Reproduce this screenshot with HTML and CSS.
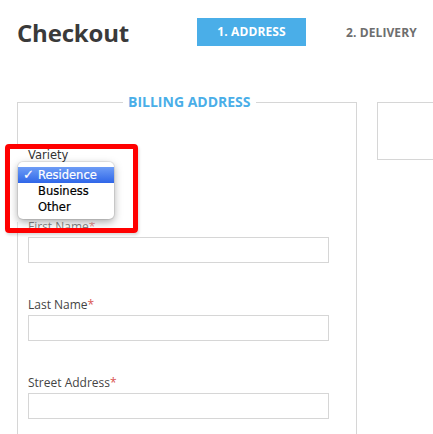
FILE: index.html
```html
<!DOCTYPE html>
<html>
<head>
<meta charset="utf-8">
<link rel="stylesheet" href="styles.css">
</head>
<body>
<div class="page">
  <header class="header">
    <h1 class="title">Checkout</h1>
    <div class="step step-active">1. ADDRESS</div>
    <div class="step">2. DELIVERY</div>
  </header>
  <main class="main">
    <fieldset class="panel billing">
      <legend class="legend">BILLING ADDRESS</legend>
      <div class="field">
        <label class="field-label">First Name<span class="req">*</span></label>
        <div class="input"></div>
      </div>
      <div class="field">
        <label class="field-label">Last Name<span class="req">*</span></label>
        <div class="input"></div>
      </div>
      <div class="field">
        <label class="field-label">Street Address<span class="req">*</span></label>
        <div class="input"></div>
      </div>
    </fieldset>
    <fieldset class="panel side"></fieldset>
  </main>
  <div class="callout">
    <div class="callout-label">Variety</div>
    <div class="menu">
      <div class="menu-item selected"><span class="check">✓</span>Residence</div>
      <div class="menu-item"><span class="check"></span>Business</div>
      <div class="menu-item"><span class="check"></span>Other</div>
    </div>
  </div>
</div>
</body>
</html>
```

FILE: styles.css
```css
html {
  overflow: hidden;
}
body {
  margin: 0;
  background: #fff;
  font-family: "Open Sans", "Liberation Sans", sans-serif;
  color: #444;
}
.page {
  position: relative;
  padding-left: 17px;
}
.header {
  display: flex;
  align-items: center;
  padding-top: 18px;
  height: 28px;
}
.title {
  margin: 2px 0 0 0;
  width: 180px;
  font-size: 24px;
  line-height: 28px;
  font-weight: 700;
  color: #3a3a3a;
  letter-spacing: -0.2px;
}
.step {
  font-size: 12px;
  font-weight: 700;
  color: #6e6e6e;
  letter-spacing: 0.1px;
}
.step-active {
  width: 109px;
  height: 28px;
  line-height: 28px;
  text-align: center;
  background: #4aaee8;
  color: #fff;
  margin-right: 40px;
}
.main {
  display: flex;
  align-items: flex-start;
  gap: 20px;
  margin-top: 48px;
}
.panel {
  margin: 0;
  border: 1px solid #d6d6d6;
  box-sizing: border-box;
}
.billing {
  flex: 0 0 340px;
  width: 340px;
  padding: 109px 26px 40px 10px;
}
.legend {
  margin: 0 auto 0 95px;
  padding: 0 5px;
  font-size: 14px;
  line-height: 16px;
  font-weight: 700;
  color: #4aaee8;
}
.side {
  flex: 0 0 200px;
  height: 58px;
  margin-top: 8px;
  padding: 0;
}
.field {
  margin-bottom: 34px;
}
.field-label {
  display: block;
  font-size: 12px;
  line-height: 15px;
  margin-bottom: 3px;
  color: #444;
}
.req {
  color: #d9534f;
}
.input {
  width: 301px;
  height: 26px;
  box-sizing: border-box;
  border: 1px solid #d6d6d6;
  background: #fff;
}
.callout {
  position: absolute;
  left: 5px;
  top: 144px;
  width: 133px;
  height: 89px;
  box-sizing: border-box;
  border: 5px solid #ff0000;
  border-radius: 4px;
  background: linear-gradient(#fff 0, #fff 73px, rgba(255, 255, 255, 0.35) 73px);
  overflow: hidden;
  box-shadow: 1px 2px 3px rgba(0, 0, 0, 0.15);
}
.callout-label {
  height: 13px;
  padding-left: 18px;
  font-family: "DejaVu Sans", sans-serif;
  font-size: 11.5px;
  line-height: 13px;
  color: #333;
}
.menu {
  position: relative;
  width: 96px;
  margin-left: 8px;
  padding: 5px 0 4px;
  box-sizing: border-box;
  height: 57px;
  background: #fff;
  border-radius: 5px;
  box-shadow: 0 3px 9px rgba(0, 0, 0, 0.35), 0 0 0 1px rgba(0, 0, 0, 0.07);
}
.menu-item {
  display: flex;
  height: 16px;
  line-height: 16px;
  font-family: "DejaVu Sans", sans-serif;
  font-size: 11.5px;
  color: #000;
  -webkit-text-stroke: 0.2px currentColor;
}
.menu-item.selected {
  background: linear-gradient(#6e9df6, #2f66e8);
  color: #fff;
}
.check {
  width: 15px;
  padding-left: 5px;
  font-size: 13px;
  font-weight: 700;
}
```
